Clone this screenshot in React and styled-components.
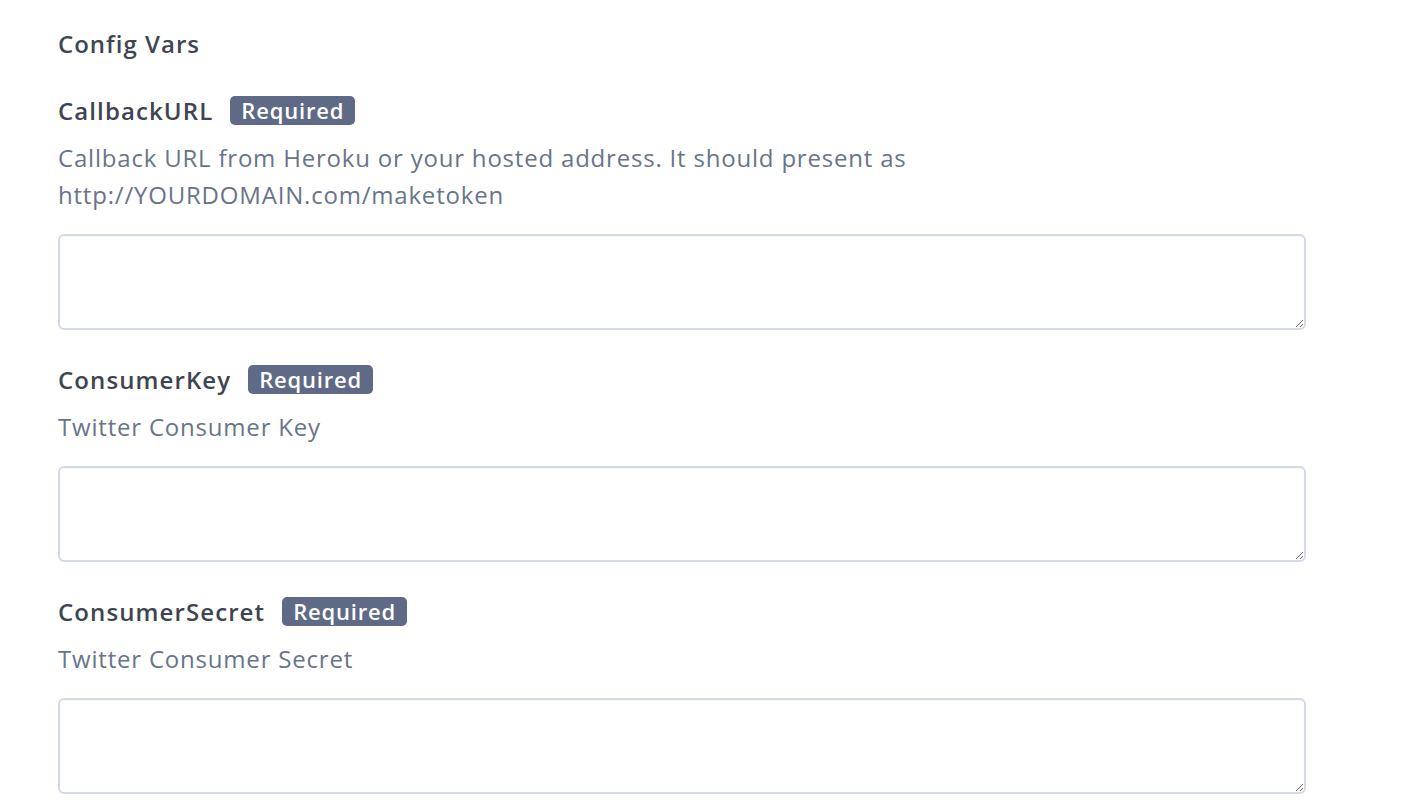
import React from "react";
import styled, { createGlobalStyle } from "styled-components";

const Global = createGlobalStyle`
  html, body { margin: 0; padding: 0; background: #ffffff; }
  body { font-family: "Open Sans", "Liberation Sans", sans-serif; -webkit-font-smoothing: antialiased; }
`;

const Page = styled.div`
  padding: 28px 0 40px 58px;
  width: 1248px;
`;

const Heading = styled.h2`
  margin: 0;
  font-size: 24px;
  line-height: 32px;
  font-weight: 600;
  letter-spacing: 1px;
  color: #3f4554;
`;

const Field = styled.div`
  display: flex;
  flex-direction: column;
  margin-top: ${(p) => (p.$first ? "35px" : "34px")};
`;

const LabelRow = styled.div`
  display: flex;
  align-items: center;
  gap: 17px;
  height: 30px;
`;

const Label = styled.label`
  font-size: 24px;
  font-weight: 600;
  letter-spacing: 1.1px;
  color: #3e4452;
`;

const Badge = styled.span`
  display: inline-flex;
  align-items: center;
  height: 29px;
  padding: 0 11px;
  border-radius: 5px;
  background: #5f6a86;
  color: #ffffff;
  font-size: 22px;
  font-weight: 600;
  letter-spacing: 0.8px;
`;

const Description = styled.p`
  margin: 14px 0 0;
  font-size: 24px;
  line-height: 37px;
  letter-spacing: 0.8px;
  color: #69748a;
`;

const TextArea = styled.textarea`
  box-sizing: border-box;
  margin-top: 21px;
  width: 1248px;
  height: 96px;
  border: 2px solid #d4d9e7;
  border-radius: 6px;
  background: #ffffff;
  box-shadow: inset 0 1px 2px rgba(20, 30, 60, 0.04);
  font-family: inherit;
  font-size: 20px;
  padding: 10px 14px;
  outline: none;
  resize: vertical;
`;

const fields = [
  {
    name: "CallbackURL",
    desc: [
      "Callback URL from Heroku or your hosted address. It should present as",
      "http://YOURDOMAIN.com/maketoken",
    ],
  },
  { name: "ConsumerKey", desc: ["Twitter Consumer Key"] },
  { name: "ConsumerSecret", desc: ["Twitter Consumer Secret"] },
];

export default function App() {
  return (
    <Page>
      <Global />
      <Heading>Config Vars</Heading>
      {fields.map((f, i) => (
        <Field key={f.name} $first={i === 0}>
          <LabelRow>
            <Label>{f.name}</Label>
            <Badge>Required</Badge>
          </LabelRow>
          <Description>
            {f.desc.map((line, j) => (
              <React.Fragment key={j}>
                {j > 0 && <br />}
                {line}
              </React.Fragment>
            ))}
          </Description>
          <TextArea />
        </Field>
      ))}
    </Page>
  );
}
